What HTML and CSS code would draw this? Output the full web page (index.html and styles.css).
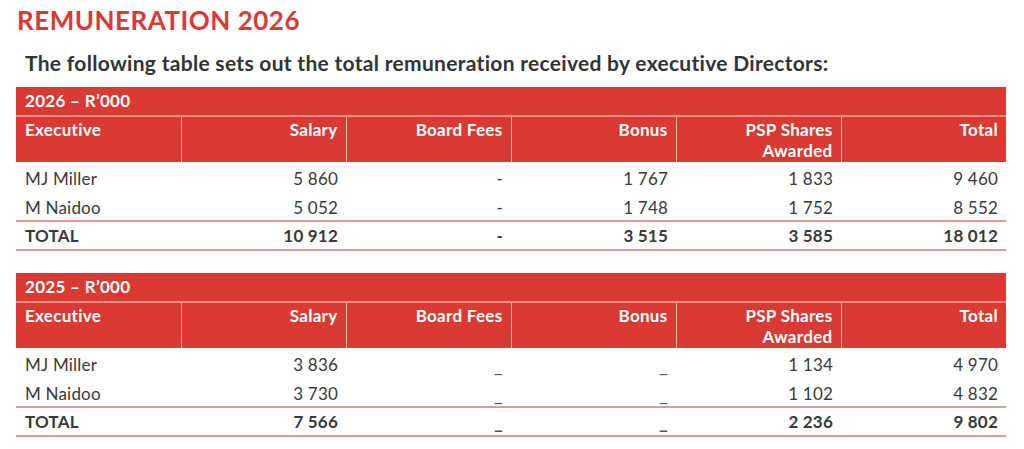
FILE: index.html
```html
<!DOCTYPE html>
<html>
<head>
<meta charset="utf-8">
<link rel="stylesheet" href="styles.css">
</head>
<body>
<div class="page">
  <h1 class="title">REMUNERATION 2026</h1>
  <p class="intro">The following table sets out the total remuneration received by executive Directors:</p>

  <table class="rem">
    <thead>
      <tr class="cap"><th colspan="6">2026 – R’000</th></tr>
      <tr class="cols">
        <th class="l">Executive</th>
        <th>Salary</th>
        <th>Board Fees</th>
        <th>Bonus</th>
        <th>PSP Shares<br>Awarded</th>
        <th>Total</th>
      </tr>
    </thead>
    <tbody>
      <tr><td class="l">MJ Miller</td><td>5 860</td><td>-</td><td>1 767</td><td>1 833</td><td>9 460</td></tr>
      <tr class="last"><td class="l">M Naidoo</td><td>5 052</td><td>-</td><td>1 748</td><td>1 752</td><td>8 552</td></tr>
      <tr class="tot"><td class="l">TOTAL</td><td>10 912</td><td>-</td><td>3 515</td><td>3 585</td><td>18 012</td></tr>
    </tbody>
  </table>

  <table class="rem second">
    <thead>
      <tr class="cap"><th colspan="6">2025 – R’000</th></tr>
      <tr class="cols">
        <th class="l">Executive</th>
        <th>Salary</th>
        <th>Board Fees</th>
        <th>Bonus</th>
        <th>PSP Shares<br>Awarded</th>
        <th>Total</th>
      </tr>
    </thead>
    <tbody>
      <tr><td class="l">MJ Miller</td><td>3 836</td><td class="u">_</td><td class="u">_</td><td>1 134</td><td>4 970</td></tr>
      <tr class="last"><td class="l">M Naidoo</td><td>3 730</td><td class="u">_</td><td class="u">_</td><td>1 102</td><td>4 832</td></tr>
      <tr class="tot"><td class="l">TOTAL</td><td>7 566</td><td class="u">_</td><td class="u">_</td><td>2 236</td><td>9 802</td></tr>
    </tbody>
  </table>
</div>
</body>
</html>
```

FILE: styles.css
```css
html, body {
  margin: 0;
  padding: 0;
  background: #ffffff;
}

.page {
  padding: 5px 0 0 16px;
  font-family: Lato, "Noto Sans", sans-serif;
  color: #3a3a3a;
}

.title {
  margin: 0;
  padding-left: 1px;
  font-size: 26px;
  line-height: 30px;
  font-weight: 700;
  color: #d93a35;
  letter-spacing: 0.5px;
}

.intro {
  margin: 16px 0 0 9px;
  font-size: 21px;
  line-height: 24px;
  font-weight: 700;
  color: #333333;
  letter-spacing: 0.3px;
}

.rem {
  margin-top: 12px;
  border-collapse: collapse;
  table-layout: fixed;
  width: 990px;
  font-size: 17px;
  letter-spacing: 0.2px;
}

.rem.second {
  margin-top: 22px;
}

.rem th,
.rem td {
  box-sizing: border-box;
  width: 165px;
  padding: 0 8px 0 9px;
  text-align: right;
  vertical-align: top;
}

.rem .l {
  text-align: left;
}

.rem thead th {
  background: #d93a34;
  color: #ffffff;
  font-weight: 700;
  letter-spacing: 0.3px;
}

.rem .cap th {
  text-align: left;
  height: 29px;
  vertical-align: middle;
  line-height: 20px;
  border-bottom: 2px solid #f08a82;
}

.rem .cols th {
  height: 46px;
  padding-top: 2px;
  line-height: 21px;
  border-left: 1px solid #f6b2aa;
}

.rem .cols th:first-child {
  border-left: none;
}

.rem tbody td {
  height: 29px;
  padding-top: 4px;
  line-height: 20px;
  vertical-align: middle;
  font-weight: 400;
}

.rem tbody tr.last td {
  height: 30px;
  border-bottom: 2px solid #e29a98;
}

.rem tbody tr.tot td {
  font-weight: 700;
  padding-top: 1px;
  border-bottom: 2px solid #e29a98;
}

.rem td.u {
  font-weight: 400;
  font-size: 19px;
  color: #555555;
}
```
